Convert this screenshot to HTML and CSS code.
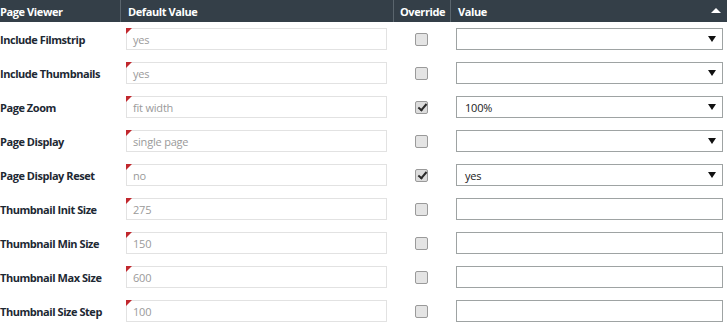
FILE: index.html
```html
<!DOCTYPE html>
<html lang="en">
<head>
    <meta charset="UTF-8">
    <meta name="viewport" content="width=device-width, initial-scale=1.0">
    <title>Page Viewer Settings</title>
    <link rel="stylesheet" href="styles.css">
</head>
<body>
    <div class="grid">
        <!-- header -->
        <div class="head first">Page Viewer</div>
        <div class="head">Default Value</div>
        <div class="head center">Override</div>
        <div class="head last">Value <span class="sort"></span></div>

        <div class="label">Include Filmstrip</div>
        <div class="cell"><div class="def">yes</div></div>
        <div class="cell center"><span class="check"></span></div>
        <div class="cell val"><div class="select"><span></span><i></i></div></div>

        <div class="label">Include Thumbnails</div>
        <div class="cell"><div class="def">yes</div></div>
        <div class="cell center"><span class="check"></span></div>
        <div class="cell val"><div class="select"><span></span><i></i></div></div>

        <div class="label">Page Zoom</div>
        <div class="cell"><div class="def">fit width</div></div>
        <div class="cell center"><span class="check on"></span></div>
        <div class="cell val"><div class="select"><span>100%</span><i></i></div></div>

        <div class="label">Page Display</div>
        <div class="cell"><div class="def">single page</div></div>
        <div class="cell center"><span class="check"></span></div>
        <div class="cell val"><div class="select"><span></span><i></i></div></div>

        <div class="label">Page Display Reset</div>
        <div class="cell"><div class="def">no</div></div>
        <div class="cell center"><span class="check on"></span></div>
        <div class="cell val"><div class="select"><span>yes</span><i></i></div></div>

        <div class="label">Thumbnail Init Size</div>
        <div class="cell"><div class="def">275</div></div>
        <div class="cell center"><span class="check"></span></div>
        <div class="cell val"><div class="text"></div></div>

        <div class="label">Thumbnail Min Size</div>
        <div class="cell"><div class="def">150</div></div>
        <div class="cell center"><span class="check"></span></div>
        <div class="cell val"><div class="text"></div></div>

        <div class="label">Thumbnail Max Size</div>
        <div class="cell"><div class="def">600</div></div>
        <div class="cell center"><span class="check"></span></div>
        <div class="cell val"><div class="text"></div></div>

        <div class="label">Thumbnail Size Step</div>
        <div class="cell"><div class="def">100</div></div>
        <div class="cell center"><span class="check"></span></div>
        <div class="cell val"><div class="text"></div></div>
    </div>
</body>
</html>
```

FILE: styles.css
```css
html, body{
    margin: 0;
    padding: 0;
    background: #fff;
}
body{
    font-family: "Open Sans", "DejaVu Sans", sans-serif;
    font-size: 11px;
    color: #1d2833;
    letter-spacing: -0.2px;
}

.grid{
    display: grid;
    grid-template-columns: 120px 273px 57px 1fr;
    grid-auto-rows: 34px;
    grid-template-rows: 22px;
}

/* header */
.head{
    background: #343f48;
    color: #fff;
    font-weight: bold;
    letter-spacing: -0.4px;
    display: flex;
    align-items: center;
    padding-left: 7px;
    border-left: 1px solid #5a656d;
}
.head.first{
    padding-left: 0;
    border-left: none;
}
.head.center{
    padding-left: 6px;
}
.head.last{
    justify-content: space-between;
    padding-right: 6px;
}
.sort{
    width: 0;
    height: 0;
    border-left: 5px solid transparent;
    border-right: 5px solid transparent;
    border-bottom: 5px solid #fff;
    margin-top: -1px;
}

/* rows */
.label{
    font-weight: bold;
    letter-spacing: -0.45px;
    display: flex;
    align-items: center;
}
.cell{
    display: flex;
    align-items: center;
    padding: 0 6px;
}
.cell.center{
    justify-content: center;
    padding: 0;
}
.cell.val{
    padding: 0 4px 0 6px;
}

.def{
    position: relative;
    flex: 1;
    height: 20px;
    border: 1px solid #e2e2e2;
    color: #9a9a9a;
    display: flex;
    align-items: center;
    padding-left: 6px;
}
/* red corner marker */
.def::before{
    content: "";
    position: absolute;
    top: -1px;
    left: -1px;
    border-top: 6px solid #c1272d;
    border-right: 6px solid transparent;
}

.check{
    width: 11px;
    height: 11px;
    border: 1px solid #9a9a9a;
    border-radius: 2px;
    background: #e4e4e4;
    position: relative;
}
.check.on{
    background: #dcdcdc;
}
.check.on::after{
    content: "";
    position: absolute;
    left: 4px;
    top: 0;
    width: 3px;
    height: 7px;
    border-right: 2px solid #2a2a2a;
    border-bottom: 2px solid #2a2a2a;
    transform: rotate(40deg);
}

.select, .text{
    flex: 1;
    height: 20px;
    border: 1px solid #9ea3a3;
    display: flex;
    align-items: center;
    padding: 0 6px 0 8px;
    color: #1a1a1a;
}
.select span{
    flex: 1;
}
.select i{
    width: 0;
    height: 0;
    border-left: 4px solid transparent;
    border-right: 4px solid transparent;
    border-top: 6px solid #111;
}
```
